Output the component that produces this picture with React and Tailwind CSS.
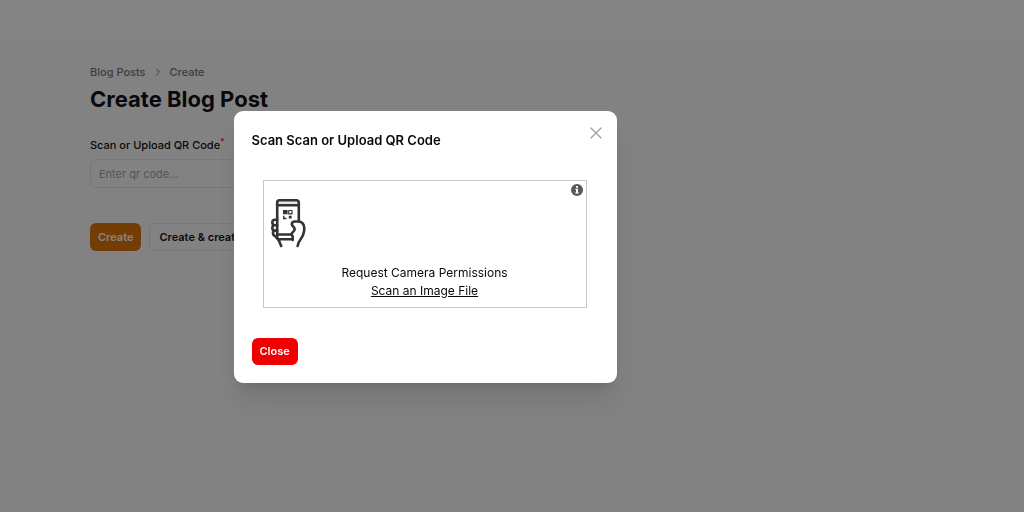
import React, { useState } from 'react';
import { ChevronRight, X } from 'lucide-react';

function PhoneScanIcon() {
  return (
    <svg
      viewBox="0 0 36 50"
      className="h-[50px] w-9"
      fill="none"
      stroke="#333"
      strokeWidth="2.6"
      strokeLinecap="round"
      strokeLinejoin="round"
      aria-hidden="true"
    >
      <path fill="#e4eaea" stroke="none" d="M8 3h20v4H8z" />
      <path d="M7.200 40V4.500a2.300 2.300 0 0 1 2.300-2.300H26.500a2.300 2.300 0 0 1 2.300 2.300V23" />
      <path d="M7.200 7.200H28.800M7.200 36.500H21.500" />
      <path d="M7.200 21.800H5a2.700 2.700 0 0 0 0 5.400h2.200M5 27.200a2.700 2.700 0 0 0 0 5.400h2.200M5 32.600c-3 1-2.500 4.500 0 5.400l3 3.300" />
      <path d="M8.500 41.300h14.200M8.500 41.500l2.700 6.500" />
      <path d="M22.700 42v-3.500c-1.500-1.500-1.500-3 0-4.200 1.700-1.200 2.500-3 1.300-5l-1.700-1.800c-1.300-2.500.7-4.200 3.200-4 2 .2 4.500-.2 6.200 1 2.500 2 3 5 2.300 9-.500 3.500-1.500 5.500-3.200 7.500-1.800 2.300-2.500 4-3.200 7" />
      <path fill="#333" stroke="none" d="M13 12h4.600v4.200H13zM13 17.800h1.400v2H16.500v1.400H13zM18.800 17.800h2.800v2.800h-2.800z" />
      <rect x="18.700" y="12.500" width="3.300" height="3.300" strokeWidth="1.200" />
    </svg>
  );
}

function InfoIcon() {
  return (
    <svg viewBox="0 0 12 12" className="size-3" aria-hidden="true">
      <circle cx="6" cy="6" r="6" fill="#585858" />
      <path d="M5 2h2v1.700H5zM4.300 4.700H7v3.700h.8v1.100H4.200V8.400H5V5.800h-.7z" fill="#fff" />
    </svg>
  );
}

function CreatePage() {
  return (
    <div className="min-h-screen bg-zinc-50">
      <header className="h-[41px] border-b border-zinc-100 bg-white" />
      <main className="px-[90px] pt-6">
        <nav aria-label="Breadcrumb" className="flex items-center gap-1.5 text-[11px] leading-[14px] font-medium text-zinc-500">
          <a href="#posts">Blog Posts</a>
          <ChevronRight size={12} className="text-zinc-500" />
          <a href="#create">Create</a>
        </nav>
        <h1 className="mt-1 text-[22px] leading-8 font-bold text-zinc-950">Create Blog Post</h1>

        <form className="mt-5" onSubmit={(e) => e.preventDefault()}>
          <label htmlFor="qr-code" className="block text-[11px] leading-5 font-medium text-zinc-950">
            Scan or Upload QR Code
            <sup className="text-red-600">*</sup>
          </label>
          <input
            id="qr-code"
            type="text"
            placeholder="Enter qr code..."
            className="mt-1 block h-[29px] w-full max-w-[410px] rounded-md border border-zinc-200 px-2 text-[11px] text-zinc-950 placeholder-zinc-400"
          />
          <div className="mt-[35px] flex gap-2">
            <button type="submit" className="h-7 rounded-md bg-[#e07000] px-2 text-[11px] font-semibold text-white">
              Create
            </button>
            <button type="button" className="h-7 rounded-md border border-zinc-200 px-[9px] text-[11px] font-semibold text-zinc-950">
              Create &amp; create another
            </button>
          </div>
        </form>
      </main>
    </div>
  );
}

function ScanModal({ onClose }) {
  return (
    <div className="fixed inset-0 flex items-center justify-center bg-zinc-950/50 pr-[174px] pb-[18px]">
      <div role="dialog" aria-labelledby="scan-title" className="w-full max-w-[383px] rounded-[9px] bg-white p-[18px] shadow-xl">
        <div className="flex h-5 items-start justify-between">
          <h2 id="scan-title" className="text-[13px] leading-[22px] font-semibold text-zinc-950">
            Scan Scan or Upload QR Code
          </h2>
          <button type="button" aria-label="Close dialog" onClick={onClose} className="-mt-1.5 -mr-[7px] text-zinc-400">
            <X size={20} strokeWidth={1.5} />
          </button>
        </div>

        <div className="mr-3 ml-[11px] mt-[31px] border border-[#c8c8c8] px-[3px] pt-[3px] pb-[7px]">
          <div className="flex items-start justify-between">
            <div className="pt-[14px] pl-[3px]">
              <PhoneScanIcon />
            </div>
            <button type="button" aria-label="Scanner info">
              <InfoIcon />
            </button>
          </div>
          <div className="mt-4 flex flex-col items-center text-[12px] leading-[18px] text-zinc-950">
            <button type="button">Request Camera Permissions</button>
            <a href="#file" className="underline">Scan an Image File</a>
          </div>
        </div>

        <button
          type="button"
          onClick={onClose}
          className="mt-[30px] block h-[27px] rounded-md bg-[#f00000] px-2 text-[11px] font-semibold text-white"
        >
          Close
        </button>
      </div>
    </div>
  );
}

export default function App() {
  const [open, setOpen] = useState(true);

  return (
    <div className="font-['Inter',sans-serif]">
      <CreatePage />
      {open && <ScanModal onClose={() => setOpen(false)} />}
    </div>
  );
}
